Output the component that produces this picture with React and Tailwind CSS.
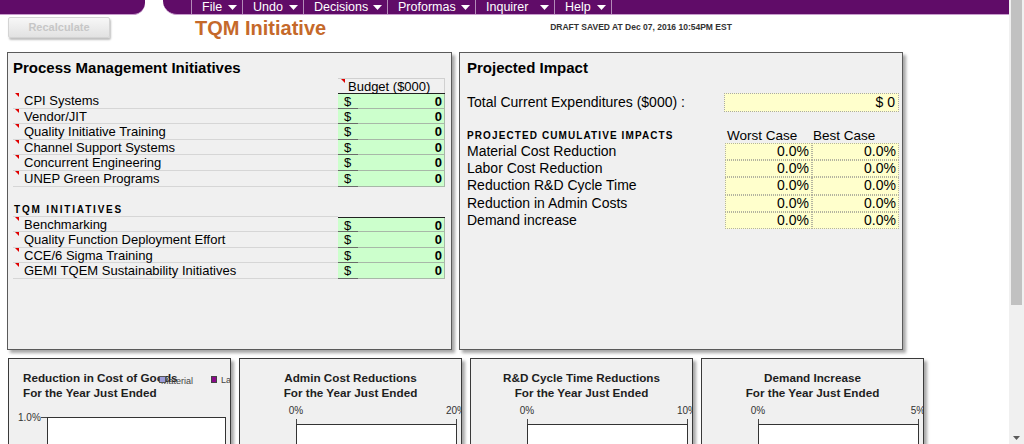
import React from "react";

const menu = [
  ["File", 51],
  ["Undo", 61],
  ["Decisions", 84],
  ["Proformas", 88],
  ["Inquirer", 79],
  ["Help", 57],
];

const pmiRows = [
  "CPI Systems",
  "Vendor/JIT",
  "Quality Initiative Training",
  "Channel Support Systems",
  "Concurrent Engineering",
  "UNEP Green Programs",
];

const tqmRows = [
  "Benchmarking",
  "Quality Function Deployment Effort",
  "CCE/6 Sigma Training",
  "GEMI TQEM Sustainability Initiatives",
];

const impactRows = [
  "Material Cost Reduction",
  "Labor Cost Reduction",
  "Reduction R&D Cycle Time",
  "Reduction in Admin Costs",
  "Demand increase",
];

// little red comment marker, like excel
const Marker = ({ className = "" }) => (
  <svg className={"absolute " + className} width="4" height="4" viewBox="0 0 4 4">
    <polygon points="0,0 4,0 4,4" fill="#e00000" />
  </svg>
);

const Caret = () => (
  <svg width="9" height="5" viewBox="0 0 9 5">
    <polygon points="0,0 9,0 4.5,5" fill="#ffffff" />
  </svg>
);

function TopBar() {
  return (
    <div className="flex h-[15px] shrink-0">
      <div className="w-[145px] h-[15px] bg-[#600c68] rounded-br-[12px] border-b border-[#c79ccc]" />
      <div className="w-[18px]" />
      <div className="flex-1 h-[15px] bg-[#600c68] rounded-bl-[14px] border-b border-[#c79ccc] pl-[28px] flex">
        <div className="flex border-l border-[#b48bb9]">
          {menu.map(([name, w]) => (
            <div
              key={name}
              style={{ width: w }}
              className="flex items-center justify-between pl-[10px] pr-[5px] border-r border-[#b48bb9] text-white text-[12.5px] leading-[14px]"
            >
              <span>{name}</span>
              <Caret />
            </div>
          ))}
        </div>
      </div>
    </div>
  );
}

function Header() {
  return (
    <div className="flex items-start h-[37px] shrink-0">
      <div className="ml-[8px] mt-[2px] w-[102px] h-[21px] rounded-[2px] border border-[#d4d4d4] bg-gradient-to-b from-[#f7f7f7] to-[#e2e2e2] shadow-[1px_2px_2px_rgba(0,0,0,0.25)] flex items-center justify-center text-[11px] font-bold text-[#c6c6c6]">
        Recalculate
      </div>
      <div className="ml-[85px] mt-[3px] text-[20px] leading-[20px] font-bold text-[#c5692a]">
        TQM Initiative
      </div>
      <div className="ml-[224px] mt-[7px] text-[8.5px] leading-[10px] font-bold text-[#333]">
        DRAFT SAVED AT Dec 07, 2016 10:54PM EST
      </div>
    </div>
  );
}

function BudgetCell({ top }) {
  return (
    <div className={"w-[107px] flex bg-[#ccffcc] text-[13px] " + (top ? "border-t border-[#222]" : "")}>
      <div className="w-[20px] pl-[6px] border-b border-[#6a6a6a] leading-[15px]">$</div>
      <div className="flex-1 text-right pr-[2px] font-bold border-b border-r border-[#a8b8a8] leading-[15px]">0</div>
    </div>
  );
}

function LabelRow({ label, top }) {
  return (
    <div className="flex h-[15.6px]">
      <div className="relative w-[325px] border-b border-[#d6d6d6] pl-[11px] text-[13px] leading-[15px] text-black">
        <Marker className="left-[2px] top-[0px]" />
        {label}
      </div>
      <BudgetCell top={top} />
    </div>
  );
}

function ProcessPanel() {
  return (
    <div className="w-[445px] h-[298px] border border-[#5a5a5a] bg-[#f0f0f0] shadow-[3px_3px_3px_rgba(0,0,0,0.35)] pt-[5px] pl-[5px]">
      <div className="text-[15px] leading-[20px] font-bold text-black">Process Management Initiatives</div>
      <div className="flex h-[15px]">
        <div className="w-[325px]" />
        <div className="relative w-[107px] border-t border-r border-[#d0d0d0] text-[13px] leading-[15px] pl-[10px] text-black">
          <Marker className="left-[3px] top-[0px]" />
          Budget ($000)
        </div>
      </div>
      <div className="flex flex-col">
        {pmiRows.map((r, i) => (
          <LabelRow key={r} label={r} top={i === 0} />
        ))}
      </div>
      <div className="mt-[16px] flex h-[14px]">
        <div className="w-[325px] border-b border-[#d6d6d6] pl-[1px] text-[10px] leading-[14px] font-bold tracking-[1.8px] text-black">
          TQM INITIATIVES
        </div>
      </div>
      <div className="flex flex-col">
        {tqmRows.map((r, i) => (
          <LabelRow key={r} label={r} top={i === 0} />
        ))}
      </div>
    </div>
  );
}

function ImpactPanel() {
  return (
    <div className="w-[444px] h-[298px] border border-[#5a5a5a] bg-[#f0f0f0] shadow-[3px_3px_3px_rgba(0,0,0,0.35)] pt-[5px] pl-[7px]">
      <div className="text-[15px] leading-[20px] font-bold text-black">Projected Impact</div>
      <div className="mt-[15px] flex items-center h-[19px]">
        <div className="w-[257px] text-[14px] text-black">Total Current Expenditures ($000) :</div>
        <div className="w-[175px] h-[19px] bg-[#ffffcc] border border-dotted border-[#a8a8a8] text-right pr-[3px] text-[14px] leading-[17px] text-black">
          $ 0
        </div>
      </div>
      <div className="mt-[16px] flex h-[15px] items-end">
        <div className="w-[258px] text-[10px] leading-[14px] font-bold tracking-[1.1px] text-black">
          PROJECTED CUMULATIVE IMPACTS
        </div>
        <div className="w-[87px] pl-[2px] text-[13.5px] leading-[15px] text-black">Worst Case</div>
        <div className="w-[87px] pl-[1px] text-[13.5px] leading-[15px] text-black">Best Case</div>
      </div>
      <div className="flex flex-col">
        {impactRows.map((r) => (
          <div key={r} className="flex h-[17.2px] text-[14px] leading-[17px] text-black">
            <div className="w-[258px]">{r}</div>
            <div className="w-[87px] bg-[#ffffcc] border border-dotted border-[#b4b4a0] text-right pr-[2px] leading-[15px]">0.0%</div>
            <div className="w-[87px] bg-[#ffffcc] border border-dotted border-[#b4b4a0] text-right pr-[2px] leading-[15px]">0.0%</div>
          </div>
        ))}
      </div>
    </div>
  );
}

function ChartPanel({ title, left, maxLabel, vertical }) {
  return (
    <div className="relative w-[223px] h-[120px] shrink-0 border border-[#3a3a3a] bg-[#f0f0f0] shadow-[3px_3px_3px_rgba(0,0,0,0.35)] overflow-hidden">
      <div
        className={
          "pt-[11px] text-[11.7px] leading-[15px] font-bold text-[#1e1e1e] " +
          (left ? "pl-[14px] text-left" : "text-center")
        }
      >
        <div>{title}</div>
        <div>For the Year Just Ended</div>
      </div>
      {vertical ? (
        <>
          <div className="absolute left-[152px] top-[17px] text-[9px] leading-[10px] text-[#444]">Material</div>
          <div className="absolute left-[150px] top-[17px] w-[7px] h-[7px] bg-[#9c9cd8] border border-[#555]" />
          <div className="absolute left-[202px] top-[17px] w-[6px] h-[7px] bg-[#8a0a8a] border border-[#444]" />
          <div className="absolute left-[212px] top-[16px] text-[9px] leading-[10px] text-[#444]">La</div>
          <svg className="block" width="221" height="60">
            <text x="9" y="21" fontSize="10" fill="#333" fontFamily="Liberation Sans, Arial, sans-serif">1.0%</text>
            <line x1="32" y1="17.5" x2="39" y2="17.5" stroke="#444" />
            <rect x="38.5" y="17.5" width="178" height="60" fill="#fff" stroke="#333" />
          </svg>
        </>
      ) : (
        <svg className="block" width="221" height="60">
          <text x="56" y="14" fontSize="10" fill="#333" textAnchor="middle" fontFamily="Liberation Sans, Arial, sans-serif">0%</text>
          <text x="216" y="14" fontSize="10" fill="#333" textAnchor="middle" fontFamily="Liberation Sans, Arial, sans-serif">{maxLabel}</text>
          <line x1="56.5" y1="19" x2="56.5" y2="24" stroke="#444" />
          <line x1="216.5" y1="19" x2="216.5" y2="24" stroke="#444" />
          <rect x="56.5" y="24.5" width="160" height="60" fill="#fff" stroke="#333" />
        </svg>
      )}
    </div>
  );
}

function Scrollbar() {
  return (
    <div className="w-[15px] h-[444px] shrink-0 bg-[#f0f0f0] flex flex-col">
      <div className="ml-[2px] w-[11px] h-[305px] shrink-0 bg-[#c1c1c1]" />
      <div className="flex-1" />
      <div className="h-[12px] flex items-center justify-center">
        <svg width="7" height="4" viewBox="0 0 7 4">
          <polygon points="0,0 7,0 3.5,4" fill="#5a5a5a" />
        </svg>
      </div>
    </div>
  );
}

export default function App() {
  return (
    <div className="flex w-[1024px] h-[444px] overflow-hidden bg-white font-['Liberation_Sans',Arial,sans-serif]">
      <div className="w-[1009px] shrink-0 flex flex-col">
        <TopBar />
        <Header />
        <div className="flex shrink-0 gap-[7px] pl-[7px]">
          <ProcessPanel />
          <ImpactPanel />
        </div>
        <div className="mt-[8px] shrink-0 flex gap-[8px] pl-[8px]">
          <ChartPanel title="Reduction in Cost of Goods" left vertical />
          <ChartPanel title="Admin Cost Reductions" maxLabel="20%" />
          <ChartPanel title="R&D Cycle Time Reductions" maxLabel="10%" />
          <ChartPanel title="Demand Increase" maxLabel="5%" />
        </div>
      </div>
      <Scrollbar />
    </div>
  );
}
